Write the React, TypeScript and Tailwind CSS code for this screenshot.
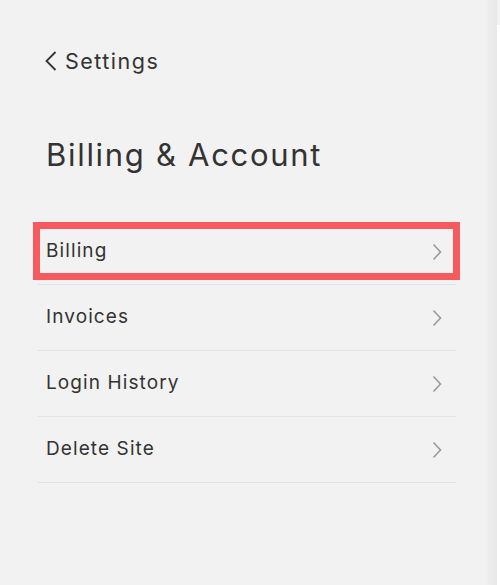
import React from "react";

const items = ["Billing", "Invoices", "Login History", "Delete Site"];

const Chevron = ({ className }: { className?: string }) => (
  <svg width="10" height="18" viewBox="0 0 10 18" fill="none" className={className}>
    <path d="M1.5 1.5 L8.5 9 L1.5 16.5" stroke="currentColor" strokeWidth="1.6" />
  </svg>
);

const App: React.FC = () => {
  return (
    <div
      className="w-[500px] h-[585px] bg-[#f2f2f2] flex overflow-hidden text-[#333]"
      style={{ fontFamily: "Inter, 'Open Sans', sans-serif" }}
    >
      <div className="relative flex-1 flex flex-col">
        <div className="mt-[49px] h-[24px] pl-[45px] flex items-center gap-[8px] text-[21.5px]">
          <svg width="12" height="20" viewBox="0 0 12 20" fill="none">
            <path d="M10.5 1 L1.5 10 L10.5 19" stroke="#333" strokeWidth="1.8" />
          </svg>
          <span className="tracking-[1.5px]">Settings</span>
        </div>

        <h1 className="mt-[62px] h-[40px] pl-[46px] flex items-center text-[31px] tracking-[1.7px]">
          Billing &amp; Account
        </h1>

        <ul className="mt-[44px] ml-[38px] w-[418px]">
          {items.map((item) => (
            <li
              key={item}
              className="h-[66px] border-b border-[#e2e2e2] flex items-center justify-between pl-[8px] pr-[14px]"
            >
              <span className="text-[19px] tracking-[1.1px]">{item}</span>
              <Chevron className="text-[#9a9a9a]" />
            </li>
          ))}
        </ul>

        <div className="absolute left-[33px] top-[222px] w-[427px] h-[58px] border-[7px] border-[#f65a5e]" />
        <div className="absolute right-0 top-0 h-full w-[14px] bg-gradient-to-r from-transparent to-[#e8e8e8]" />
      </div>
      <div className="w-[3px] mt-[25px] bg-white" />
    </div>
  );
};

export default App;
